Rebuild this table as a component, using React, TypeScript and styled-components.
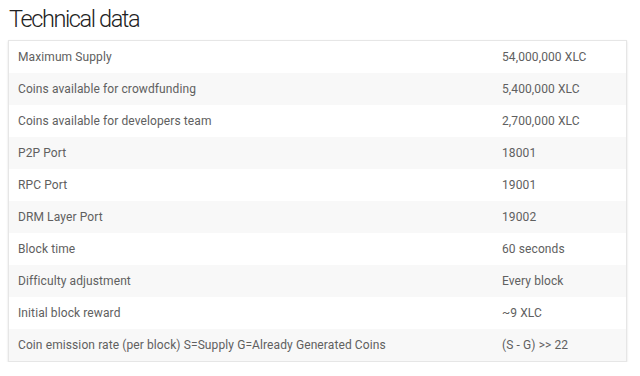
import * as React from 'react';
import styled, { createGlobalStyle } from 'styled-components';

const GlobalStyle = createGlobalStyle`
  body {
    margin: 0;
    background: #fff;
    font-family: Roboto, "Liberation Sans", sans-serif;
  }
`;

const Page = styled.div`
  padding: 4px 13px 0 8px;
`;

const Title = styled.h2`
  margin: 0 0 5px 1px;
  font-size: 23.5px;
  font-weight: 300;
  letter-spacing: -1.4px;
  line-height: 31px;
  color: #222;
`;

const Card = styled.div`
  border: 1px solid #e6e6e6;
  box-shadow: 0 1px 2px rgba(0, 0, 0, 0.12);
`;

const Table = styled.table`
  width: 100%;
  border-collapse: collapse;
`;

const Row = styled.tr<{ $striped: boolean }>`
  height: 32px;
  background: ${(p) => (p.$striped ? '#f8f8f8' : '#fff')};
`;

const Cell = styled.td<{ $value?: boolean }>`
  padding: 0 0 0 ${(p) => (p.$value ? '0' : '9px')};
  width: ${(p) => (p.$value ? 'auto' : '484px')};
  font-size: 12px;
  letter-spacing: 0.1px;
  color: #606060;
  vertical-align: middle;
`;

const rows: [string, string][] = [
  ['Maximum Supply', '54,000,000 XLC'],
  ['Coins available for crowdfunding', '5,400,000 XLC'],
  ['Coins available for developers team', '2,700,000 XLC'],
  ['P2P Port', '18001'],
  ['RPC Port', '19001'],
  ['DRM Layer Port', '19002'],
  ['Block time', '60 seconds'],
  ['Difficulty adjustment', 'Every block'],
  ['Initial block reward', '~9 XLC'],
  ['Coin emission rate (per block) S=Supply G=Already Generated Coins', '(S - G) >> 22'],
];

const App = () => (
  <Page>
    <GlobalStyle />
    <Title>Technical data</Title>
    <Card>
      <Table>
        <tbody>
          {rows.map(([label, value], i) => (
            <Row key={label} $striped={i % 2 === 1}>
              <Cell>{label}</Cell>
              <Cell $value>{value}</Cell>
            </Row>
          ))}
        </tbody>
      </Table>
    </Card>
  </Page>
);

export default App;
